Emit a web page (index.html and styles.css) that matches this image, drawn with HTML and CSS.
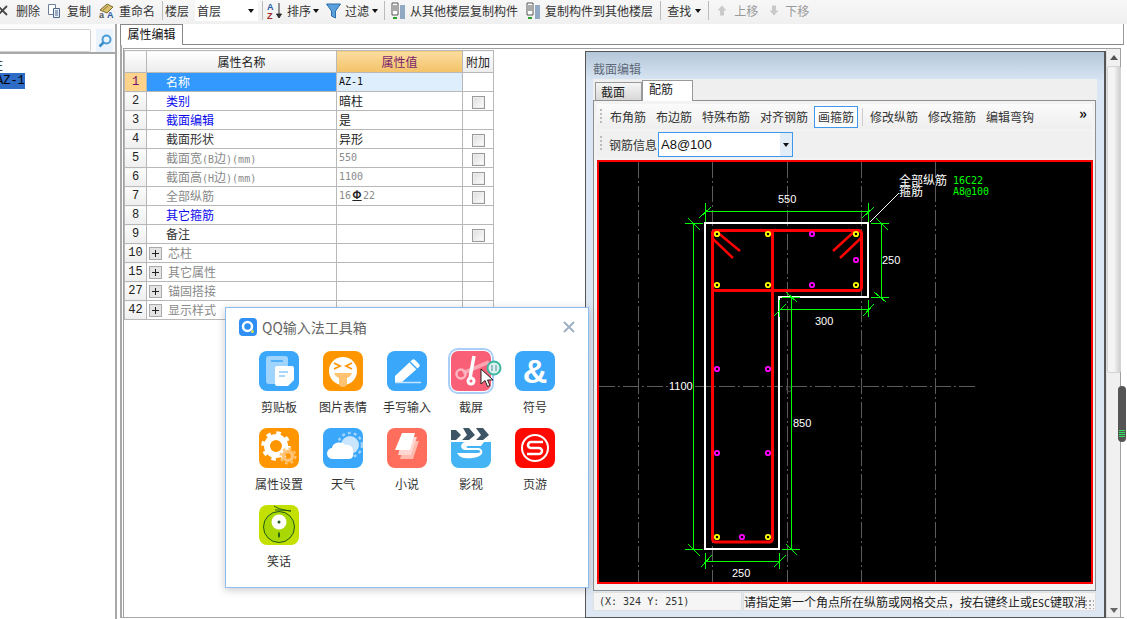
FILE: index.html
```html
<!DOCTYPE html>
<html lang="zh">
<head>
<meta charset="utf-8">
<title>属性编辑</title>
<link rel="stylesheet" href="styles.css">
</head>
<body>
<div class="app">
  <header class="toolbar">
    <span class="tool t-del"><svg class="ic" width="12" height="12" viewBox="0 0 12 12"><path d="M1 1l9 9M10 1l-9 9" stroke="#444" stroke-width="1.800"/></svg></span>
    <span class="tool t-delt">删除</span>
    <span class="tool t-copy"><svg width="16" height="16" viewBox="0 0 16 16"><path d="M1.500 1.500h7v10h-7z" fill="#fff" stroke="#6b7f9a"/><path d="M6.500 5.500h6v9h-6z" fill="#e8eef7" stroke="#50688a"/><path d="M8 8h3M8 10h3M8 12h3" stroke="#50688a"/></svg>复制</span>
    <span class="tool t-ren"><svg width="17" height="17" viewBox="0 0 17 17"><path d="M1 8l7-6 6 3-6 6z" fill="#d9c06a" stroke="#7b6a30"/><path d="M4 8l5-4" stroke="#8a7a3a"/><text x="0" y="16" class="mini">a</text><text x="8" y="16" class="mini blue">A</text></svg>重命名</span>
    <i class="sep s1"></i>
    <span class="tool t-floor">楼层</span>
    <span class="combo"><span>首层</span><b class="tri"></b></span>
    <i class="sep s2"></i>
    <span class="tool t-sort"><svg width="17" height="18" viewBox="0 0 17 18"><text x="0" y="8" class="mini blue">A</text><text x="0" y="17" class="mini red">Z</text><path d="M12 1v14M9.500 12l2.500 4 2.500-4z" stroke="#333" fill="#333"/></svg>排序<b class="tri"></b></span>
    <span class="tool t-filter"><svg width="15" height="16" viewBox="0 0 15 16"><path d="M0.500 1h14l-5 7v7l-4-2v-5z" fill="#5aa0dc" stroke="#2c6ea8"/></svg>过滤<b class="tri"></b></span>
    <i class="sep s3"></i>
    <span class="tool t-from"><svg width="15" height="18" viewBox="0 0 15 18"><path d="M1 1h6v12H1z" fill="#fff" stroke="#555"/><path d="M2 4h4M2 6h4M2 8h4" stroke="#555"/><path d="M9 4h5M9 6h5M9 8h5M9 10h5M9 12h5M9 14h5M9 16h5" stroke="#2f5f90"/><path d="M2 15h4v2H2z" fill="#2aa12a"/></svg>从其他楼层复制构件</span>
    <span class="tool t-to"><svg width="15" height="18" viewBox="0 0 15 18"><path d="M1 1h6v12H1z" fill="#fff" stroke="#555"/><path d="M2 4h4M2 6h4M2 8h4" stroke="#555"/><path d="M9 4h5M9 6h5M9 8h5M9 10h5M9 12h5M9 14h5M9 16h5" stroke="#2f5f90"/><path d="M2 15h4v2H2z" fill="#2aa12a"/></svg>复制构件到其他楼层</span>
    <i class="sep s4"></i>
    <span class="tool t-find">查找<b class="tri"></b></span>
    <i class="sep s5"></i>
    <span class="tool t-up off"><svg width="10" height="11" viewBox="0 0 10 11"><path d="M5 0.500L9.500 5.500H7v5H3v-5H0.500z" fill="#c9c9c9"/></svg>上移</span>
    <span class="tool t-down off"><svg width="10" height="11" viewBox="0 0 10 11"><path d="M5 10.500L9.500 5.500H7v-5H3v5H0.500z" fill="#c9c9c9"/></svg>下移</span>
  </header>

  <div class="main">
    <aside class="side">
      <div class="searchrow">
        <div class="searchbox"></div>
        <span class="searchbtn"><svg width="14" height="14" viewBox="0 0 14 14"><circle cx="8.500" cy="5.500" r="4" fill="#e8f4ff" stroke="#4a9ad8" stroke-width="2"/><path d="M5.500 8.500L1.500 12.500" stroke="#3b8ccb" stroke-width="2.500"/></svg></span>
      </div>
      <div class="tree">
        <div class="tree-item first">柱</div>
        <div class="tree-item sel">AZ-1</div>
      </div>
    </aside>

    <section class="content">
      <div class="tabstrip"><span class="tab">属性编辑</span></div>
      <div class="tabbody">
      <div class="pane">
        <div class="gridwrap">
          <table class="grid">
            <colgroup><col class="c0"><col class="c1"><col class="c2"><col class="c3"></colgroup>
            <thead><tr><th></th><th>属性名称</th><th class="hl">属性值</th><th>附加</th></tr></thead>
            <tbody>
              <tr class="cur"><td class="n">1</td><td class="name">名称</td><td class="val mono">AZ-1</td><td></td></tr>
              <tr><td class="n">2</td><td class="name link">类别</td><td class="val">暗柱</td><td class="ck"><i></i></td></tr>
              <tr><td class="n">3</td><td class="name link">截面编辑</td><td class="val">是</td><td></td></tr>
              <tr><td class="n">4</td><td class="name">截面形状</td><td class="val">异形</td><td class="ck"><i></i></td></tr>
              <tr><td class="n">5</td><td class="name dim">截面宽<span class="asc">(B</span>边<span class="asc">)(mm)</span></td><td class="val dim mono">550</td><td class="ck"><i></i></td></tr>
              <tr><td class="n">6</td><td class="name dim">截面高<span class="asc">(H</span>边<span class="asc">)(mm)</span></td><td class="val dim mono">1100</td><td class="ck"><i></i></td></tr>
              <tr><td class="n">7</td><td class="name dim">全部纵筋</td><td class="val dim mono">16<span class="rebar">Φ</span>22</td><td class="ck"><i></i></td></tr>
              <tr><td class="n">8</td><td class="name link">其它箍筋</td><td></td><td></td></tr>
              <tr><td class="n">9</td><td class="name">备注</td><td></td><td class="ck"><i></i></td></tr>
              <tr><td class="n">10</td><td class="name dim grp"><b class="plus"></b>芯柱</td><td></td><td></td></tr>
              <tr><td class="n">15</td><td class="name dim grp"><b class="plus"></b>其它属性</td><td></td><td></td></tr>
              <tr><td class="n">27</td><td class="name dim grp"><b class="plus"></b>锚固搭接</td><td></td><td></td></tr>
              <tr><td class="n">42</td><td class="name dim grp"><b class="plus"></b>显示样式</td><td></td><td></td></tr>
            </tbody>
          </table>
        </div>
        <div class="vscroll">
          <span class="arrow-up"></span>
          <div class="vthumb"></div>
          <span class="arrow-down"></span>
        </div>
      </div>
      </div>
    </section>
  </div>

  <div class="dialog">
    <div class="dlg-title">截面编辑</div>
    <div class="dlg-tabs"><span class="dtab">截面</span><span class="dtab on">配筋</span></div>
    <div class="dlg-body">
      <div class="dbar">
        <i class="grip"></i>
        <span class="dbtn">布角筋</span><span class="dbtn">布边筋</span><span class="dbtn">特殊布筋</span><span class="dbtn">对齐钢筋</span><span class="dbtn active">画箍筋</span>
        <i class="dsep"></i>
        <span class="dbtn">修改纵筋</span><span class="dbtn">修改箍筋</span><span class="dbtn">编辑弯钩</span>
        <span class="more">»</span>
      </div>
      <div class="dbar second">
        <i class="grip"></i>
        <span class="dlabel">钢筋信息</span>
        <span class="dcombo"><span>A8@100</span><b class="dd"><b class="tri"></b></b></span>
      </div>
      <svg class="cad" viewBox="600 162 492 420" width="492" height="420" role="img">
        <g class="gridline">
          <path d="M639.500 162V582M713.500 162V582M788.500 162V582M862.500 162V582M936.500 162V582"/>
          <path d="M600 386.500H976"/>
        </g>
        <circle class="origin" cx="790" cy="389" r="2.500"/>
        <path class="outline" d="M706 223H869V297H780V549H706Z"/>
        <g class="stir">
          <rect x="713.500" y="230.500" width="60" height="311.500" rx="3"/>
          <rect x="713.500" y="230.500" width="149" height="60" rx="3"/>
          <path d="M718 232L741 251M714 239L734 258M857 230L834 251M862 238L841 258"/>
        </g>
        <g class="dimline">
          <path d="M706 211H869M706 203V222M869 203V222M700 218L712 207M863 218L875 207"/>
          <path d="M694 223V549M686 223H704M689 218L701 230M686 549H704M689 544L701 556"/>
          <path d="M882 223V297M872 223H890M877 218L889 230M872 297H890M875 292L887 302"/>
          <path d="M780 309H869M780 300V317M869 300V317M775 316L787 304M864 316L875 304"/>
          <path d="M792 297V549M783 297H801M787 292L798 302M783 549H801M787 544L798 555"/>
          <path d="M706 561H780M706 553V569M780 553V569M702 567L713 555M775 567L787 555"/>
        </g>
        <path class="leader" d="M871 222L900 193"/>
        <g class="bar-y">
          <circle cx="718" cy="234" r="2.200"/><circle cx="769" cy="234" r="2.200"/><circle cx="857" cy="234" r="2.200"/>
          <circle cx="718" cy="285" r="2.200"/><circle cx="769" cy="285" r="2.200"/><circle cx="857" cy="285" r="2.200"/>
          <circle cx="718" cy="537" r="2.200"/><circle cx="769" cy="537" r="2.200"/>
        </g>
        <g class="bar-m">
          <circle cx="813" cy="234" r="2.200"/><circle cx="857" cy="260" r="2.200"/><circle cx="813" cy="285" r="2.200"/>
          <circle cx="718" cy="369" r="2.200"/><circle cx="769" cy="369" r="2.200"/>
          <circle cx="718" cy="453" r="2.200"/><circle cx="769" cy="453" r="2.200"/><circle cx="743" cy="537" r="2.200"/>
        </g>
        <rect class="maskbg" x="669" y="379" width="25" height="14"/>
        <g class="lbl">
          <text x="779" y="203">550</text><text x="883" y="264">250</text><text x="816" y="325">300</text>
          <text x="670" y="390">1100</text><text x="794" y="427">850</text><text x="733" y="577">250</text>
          <text x="900" y="185" class="cjk">全部纵筋</text><text x="900" y="196" class="cjk">箍筋</text>
        </g>
        <g class="lblg"><text x="954" y="184">16C22</text><text x="954" y="195">A8@100</text></g>
      </svg>
    </div>
    <div class="dlg-status">
      <span class="st-l">(X: 324 Y: 251)</span>
      <span class="st-r">请指定第一个角点所在纵筋或网格交点，按右键终止或<span class="asc">ESC</span>键取消<i class="sgrip"></i></span>
    </div>
  </div>

  <div class="overlay-thumb"><i></i><i></i><i></i><i></i></div>

  <div class="qq">
    <div class="qq-head">
      <svg class="qq-logo" width="18" height="18" viewBox="0 0 18 18"><rect width="18" height="18" rx="4" fill="#2f8ff5"/><circle cx="8.500" cy="8.500" r="4.500" fill="none" stroke="#fff" stroke-width="2.500"/><circle cx="13.500" cy="13.500" r="1.500" fill="#d7e34a"/></svg>
      <span class="qq-title">QQ输入法工具箱</span>
      <svg class="qq-close" width="12" height="12" viewBox="0 0 12 12"><path d="M1 1l10 10M11 1L1 11" stroke="#9db0c4" stroke-width="2"/></svg>
    </div>
    <div class="qq-grid">
      <div class="qi"><svg class="ico" viewBox="0 0 40 40"><rect width="40" height="40" rx="8" fill="#3aa7fa"/><rect x="7" y="5" width="22" height="28" rx="3" fill="#9fd4ff"/><path d="M12 10h12" stroke="#3aa7fa" stroke-width="1.500"/><path d="M18 15h15a2 2 0 0 1 2 2v12l-6 6H18a2 2 0 0 1-2-2V17a2 2 0 0 1 2-2z" fill="#fff"/><path d="M20 21h9M20 25h6" stroke="#8cc9fb" stroke-width="1.500"/></svg><span>剪贴板</span></div>
      <div class="qi"><svg class="ico" viewBox="0 0 40 40"><rect width="40" height="40" rx="8" fill="#ff9600"/><circle cx="20" cy="20" r="14" fill="#fff"/><path d="M11 12l6 3-6 3M29 12l-6 3 6 3" fill="none" stroke="#ff9600" stroke-width="1.800"/><path d="M11 22h18c-1 3-3 4-5 5v5a4 4 0 0 1-8 0v-5c-2-1-4-2-5-5z" fill="#ffc372"/></svg><span>图片表情</span></div>
      <div class="qi"><svg class="ico" viewBox="0 0 40 40"><rect width="40" height="40" rx="8" fill="#3aa7fa"/><path d="M8 25L25 9a2 2 0 0 1 3 0l4 4a2 2 0 0 1 0 3L15 31H8z" fill="#fff"/><path d="M23 11l7 7" stroke="#3aa7fa" stroke-width="1.500"/><path d="M8 31.500h26" stroke="#c5e5fe" stroke-width="1.500"/></svg><span>手写输入</span></div>
      <div class="qi cut"><svg class="ico" viewBox="0 0 40 40"><rect width="40" height="40" rx="6" fill="#fa5f78"/><path d="M12 22l26-11" stroke="#fca5b2" stroke-width="4"/><path d="M23 5l-4 22" stroke="#fff" stroke-width="3.500"/><circle cx="10" cy="23" r="4.500" fill="none" stroke="#fcb6c1" stroke-width="2.500"/><circle cx="20" cy="30" r="4.500" fill="#fff"/><circle cx="20" cy="30" r="1.500" fill="#fa5f78"/></svg><span>截屏</span>
        <svg class="busy" width="18" height="18" viewBox="0 0 18 18"><circle cx="9" cy="9" r="6.500" fill="#d8f3ee" stroke="#3fb6a0" stroke-width="2"/><path d="M7 6v6M11 6v6" stroke="#8ab" stroke-width="1.500"/></svg>
        <svg class="cursor" width="14" height="20" viewBox="0 0 14 20"><path d="M1 1v15l4-3.500 2.500 6 2.500-1-2.500-5.500H13z" fill="#fff" stroke="#222"/></svg>
      </div>
      <div class="qi"><svg class="ico" viewBox="0 0 40 40"><rect width="40" height="40" rx="8" fill="#3aa7fa"/><text class="amp" x="20" y="32">&amp;</text></svg><span>符号</span></div>

      <div class="qi"><svg class="ico" viewBox="0 0 40 40"><rect width="40" height="40" rx="8" fill="#ff9600"/><circle cx="17" cy="18" r="9" fill="none" stroke="#fff" stroke-width="6"/><circle cx="17" cy="18" r="13" fill="none" stroke="#fff" stroke-width="3.500" stroke-dasharray="4.500 5.700"/><circle cx="29" cy="28" r="4.500" fill="none" stroke="#ffc375" stroke-width="3.500"/><circle cx="29" cy="28" r="7.500" fill="none" stroke="#ffc375" stroke-width="2" stroke-dasharray="3 2.900"/></svg><span>属性设置</span></div>
      <div class="qi"><svg class="ico" viewBox="0 0 40 40"><rect width="40" height="40" rx="8" fill="#3aa7fa"/><circle cx="27" cy="17" r="9" fill="#c9e6fe"/><circle cx="27" cy="17" r="12" fill="none" stroke="#9fd3fd" stroke-width="2.500" stroke-dasharray="3 3"/><path d="M10 31a5.500 5.500 0 0 1-1-11c1-6 10-7 13-3 6-1 9 3 8 8 1 3-1 6-4 6z" fill="#fff"/></svg><span>天气</span></div>
      <div class="qi"><svg class="ico" viewBox="0 0 40 40"><rect width="40" height="40" rx="8" fill="#ff6e5c"/><path d="M19 13h13l-6 18H13z" fill="#ffb9ad"/><path d="M16 9h14l-6 18H11z" fill="#ffd7d0"/><path d="M15 5h13l-5 17H8z" fill="#fff"/></svg><span>小说</span></div>
      <div class="qi"><svg class="ico" viewBox="0 0 40 40"><rect width="40" height="40" rx="8" fill="#fff"/><path d="M0 14h40v18a8 8 0 0 1-8 8H8a8 8 0 0 1-8-8z" fill="#44b4f4"/><path d="M0 2h5l5 5-5 5H0zM12 0h6l6 7-6 5h-7l5-5zM25 0h7l6 7-6 5h-7l5-5z" fill="#3e5566"/><path d="M33 14H15c-6 0-7 8 0 8h12c3 0 3 3 0 3H6c3 5 8 6 16 5 10-1 12-8 6-10H17c-2 0-2-2 0-2h13z" fill="#fff"/></svg><span>影视</span></div>
      <div class="qi"><svg class="ico" viewBox="0 0 40 40"><rect width="40" height="40" rx="8" fill="#ff0a00"/><circle cx="20" cy="20" r="13" fill="none" stroke="#fff" stroke-width="2"/><path d="M28 14H16a3 3 0 0 0 0 6h8a3 3 0 0 1 0 6H12" fill="none" stroke="#fff" stroke-width="2.500"/></svg><span>页游</span></div>

      <div class="qi"><svg class="ico" viewBox="0 0 40 40"><rect width="40" height="40" rx="8" fill="#c3e000"/><circle cx="20" cy="22" r="15.500" fill="#a9d800" stroke="#1f5a1a" stroke-width="1"/><path d="M15 1c5 3 9 4 17 5M16 5c5 0 9 0 16 1" stroke="#1f5a1a" stroke-width="1" fill="none"/><circle cx="20" cy="17" r="7.500" fill="#fff"/><circle cx="20" cy="17" r="1.500" fill="#1f5a1a"/><ellipse cx="20" cy="30" rx="1" ry="3" fill="#1f5a1a"/></svg><span>笑话</span></div>
    </div>
  </div>
</div>
</body>
</html>
```

FILE: styles.css
```css
* { box-sizing: border-box; }
html, body { margin: 0; height: 100%; overflow: hidden; background: #fff; }
body { font-family: "Noto Sans CJK SC", "Liberation Sans", sans-serif; font-size: 12px; color: #222; }
.app { position: relative; width: 1127px; height: 619px; overflow: hidden; display: flex; flex-direction: column; }
.asc { font: 10px "DejaVu Sans Mono", monospace; }

/* top toolbar */
.toolbar { height: 24px; flex: none; display: flex; align-items: center; padding-bottom: 3px; background: linear-gradient(#f7f7f7, #f0f0f0); white-space: nowrap; line-height: 16px; color: #333; }
.tool { display: inline-flex; align-items: center; flex: none; }
.tool svg { flex: none; }
.tri { display: inline-block; width: 0; height: 0; border: 3px solid transparent; border-top: 4px solid #111; border-bottom: 0; }
.tool .tri { margin-left: 4px; }
.tool.t-sort .tri, .tool.t-filter .tri { margin-left: -1px; }
.sep { flex: none; width: 1px; height: 19px; background: #bbb; }
.mini { font: bold 9px "Liberation Sans", sans-serif; fill: #555; }
.mini.blue { fill: #2a5aa8; }
.mini.red { fill: #a02a2a; }
.t-del { margin-left: -3px; }
.t-delt { margin-left: 7px; }
.t-copy { margin-left: 7px; gap: 4px; }
.t-ren { margin-left: 8px; gap: 3px; }
.s1 { margin-left: 7px; }
.t-floor { margin-left: 2px; }
.combo { width: 63px; height: 21px; margin-left: 6px; padding: 0 4px 0 2px; background: #fff; display: flex; align-items: center; justify-content: space-between; }
.s2 { margin-left: 4px; }
.t-sort { margin-left: 4px; gap: 3px; }
.t-filter { margin-left: 7px; gap: 4px; }
.s3 { margin-left: 6px; }
.t-from { margin-left: 6px; gap: 4px; }
.t-to { margin-left: 8px; gap: 4px; }
.s4 { margin-left: 7px; }
.t-find { margin-left: 6px; }
.s5 { margin-left: 7px; }
.t-up { margin-left: 8px; gap: 7px; }
.t-down { margin-left: 11px; gap: 6px; }
.off { color: #9a9a9a; }

.main { flex: 1; display: flex; min-height: 0; background: #fff; }

/* left tree */
.side { width: 117px; flex: none; border-right: 2px solid #a8a8a8; }
.searchrow { height: 30px; padding-top: 5px; display: flex; border-bottom: 2px solid #a8a8a8; background: #fbfbfb; }
.searchbox { width: 91px; height: 23px; background: #fff; border: 1px solid #d0d0d0; border-left: 0; border-radius: 0 2px 2px 0; }
.searchbtn { margin-left: 5px; width: 17px; height: 23px; background: #eaf3fb; display: flex; align-items: center; justify-content: center; }
.tree { padding-top: 4px; font-family: "Liberation Mono", "Noto Sans CJK SC", monospace; font-size: 12px; color: #111; }
.tree-item { height: 14px; line-height: 14px; }
.first { margin-left: -9px; font-family: "Noto Sans CJK SC", sans-serif; }
.sel { width: 25px; height: 16px; line-height: 16px; margin-top: 1px; background: #2f6cc6; color: #000; text-indent: -4px; overflow: hidden; white-space: nowrap; }

/* right content */
.content { flex: 1; min-width: 0; margin-left: 3px; margin-right: 3px; display: flex; flex-direction: column; }
.tabstrip { height: 21px; flex: none; border-bottom: 1px solid #888; border-right: 1px solid #999; }
.tab { display: inline-block; height: 21px; width: 63px; text-align: center; background: #fff; border: 1px solid #888; border-bottom: 0; font-size: 12px; line-height: 18px; color: #111; }
.tabbody { flex: 1; min-height: 0; display: flex; margin-bottom: 1px; padding-left: 1px; border-left: 2px solid #a8a8a8; border-bottom: 1px solid #a8a8a8; }
.pane { flex: 1; min-width: 0; margin: 3px 3px 0 0; display: flex; border: 1px solid #a0a0a0; border-bottom: 0; }
.gridwrap { flex: 1; min-width: 0; padding: 1px 0 0 0; overflow: hidden; }
.vscroll { width: 14px; flex: none; background: #f0f0f0; position: relative; border-left: 1px solid #ddd; display: flex; flex-direction: column; align-items: center; padding-top: 6px; }
.arrow-up { width: 0; height: 0; border: 4px solid transparent; border-bottom: 5px solid #555; border-top: 0; }
.vthumb { width: 14px; height: 307px; margin-top: 6px; background: linear-gradient(90deg, #f4f4f4 50%, #cfcfcf); border: 1px solid #d4d4d4; border-radius: 2px; }
.arrow-down { position: absolute; bottom: 4px; width: 0; height: 0; border: 4px solid transparent; border-top: 5px solid #666; border-bottom: 0; }

/* property grid */
.grid { border-collapse: collapse; table-layout: fixed; width: 369px; }
.c0 { width: 22px; } .c1 { width: 190px; } .c2 { width: 126px; } .c3 { width: 31px; }
.grid th, .grid td { border: 1px solid #b8b8b8; padding: 0; height: 19px; font-weight: 400; overflow: hidden; white-space: nowrap; line-height: 16px; font-size: 12px; }
.grid th { height: 22px; background: linear-gradient(#fff, #ececec); text-align: center; color: #222; }
.grid th.hl { background: linear-gradient(#fbdc9e, #f3c268); color: #7a1f6e; }
.n { background: linear-gradient(#fdfdfd, #eee); text-align: center; font-family: "Liberation Mono", monospace; color: #222; }
.name { padding-left: 19px !important; color: #333; }
.grp { padding-left: 2px !important; }
.val { padding-left: 2px !important; color: #222; }
.mono { font-family: "DejaVu Sans Mono", monospace; font-size: 10px !important; }
.link { color: #0a0aee; }
.dim { color: #8a8a8a; }
.rebar { display: inline-block; width: 12px; text-align: center; font: 700 11px/12px "Noto Sans CJK SC", sans-serif; color: #222; text-decoration: underline; }
.cur .n { background: #fdd28a; color: #70106a; }
.cur .name { background: #3399ff; color: #fff; }
.cur .val { background: #deeefc; color: #111; }
.ck { text-align: center; }
.ck i { display: inline-block; width: 13px; height: 13px; vertical-align: middle; border: 1px solid #9a9a9a; background: linear-gradient(135deg, #dcdcdc, #fff); box-shadow: inset 0 0 0 1px #eee; }
.plus { display: inline-block; width: 13px; height: 13px; margin-right: 6px; vertical-align: -2px; border: 1px solid #aaa; background: linear-gradient(#222, #222) center/7px 1px no-repeat, linear-gradient(#222, #222) center/1px 7px no-repeat, #e4e4e4; }

/* section editor dialog (floating window) */
.dialog { position: absolute; left: 585px; top: 51px; width: 521px; height: 567px; border: 1px solid #555; border-right-width: 2px; background: linear-gradient(#b4c7d9, #dae6f4 30px, #dde7f3); padding: 0 7px; display: flex; flex-direction: column; }
.dlg-title { height: 27px; flex: none; padding-top: 9px; line-height: 16px; color: #5e6a78; }
.dlg-tabs { height: 21px; flex: none; display: flex; align-items: flex-end; padding-left: 2px; background: #efefef; }
.dtab { width: 47px; height: 18px; line-height: 17px; padding-left: 5px; border: 1px solid #999; border-bottom: 0; background: linear-gradient(#f5f5f5, #d8d8d8); color: #222; font-size: 12px; }
.dtab.on { width: 51px; height: 21px; line-height: 16px; padding-left: 6px; background: #fff; position: relative; top: 1px; z-index: 1; }
.dlg-body { width: 503px; height: 491px; flex: none; border: 1px solid #8f8f8f; background: #f3f3f3; padding: 3px 3px 0; display: flex; flex-direction: column; gap: 2px; }
.dbar { height: 25px; flex: none; position: relative; display: flex; align-items: center; padding-left: 9px; background: linear-gradient(#fbfbfb, #eee); color: #333; white-space: nowrap; }
.dbar.second { height: 27px; padding-left: 12px; background: #f0f0f0; }
.grip { position: absolute; left: 3px; top: 5px; width: 2px; height: 15px; background: repeating-linear-gradient(#bbb 0 2px, transparent 2px 4px); }
.dbtn { height: 22px; line-height: 19px; padding: 0 3px; margin-right: 2px; flex: none; border: 1px solid transparent; color: #333; }
.dbtn.active { background: #fff; border-color: #3f98ec; }
.dsep { width: 1px; height: 18px; background: #ccc; margin: 0 3px 0 2px; flex: none; }
.more { position: absolute; right: 5px; top: 0; font-size: 15px; line-height: 18px; font-weight: 700; color: #111; }
.dlabel { flex: none; color: #333; }
.dcombo { margin-left: 1px; width: 135px; height: 25px; background: #fff; border: 1px solid #3f98ec; font-size: 13px; font-family: "Liberation Sans", sans-serif; color: #111; display: flex; align-items: center; justify-content: space-between; padding-left: 2px; }
.dd { width: 12px; height: 23px; background: #e3edf8; display: flex; align-items: center; justify-content: center; }
.cad { flex: none; display: block; box-sizing: content-box; width: 492px; height: 420px; border: 2px solid #f00; background: #000; }
.gridline path { stroke: #5c5c5c; stroke-width: 1; stroke-dasharray: 16 3 2 3; fill: none; shape-rendering: crispEdges; }
.origin { fill: none; stroke: #444; stroke-width: 1; }
.outline { fill: none; stroke: #fff; stroke-width: 2; shape-rendering: crispEdges; }
.stir rect { fill: none; stroke: #f00; stroke-width: 3; }
.stir path { fill: none; stroke: #f00; stroke-width: 2.500; }
.dimline path { fill: none; stroke: #0f0; stroke-width: 1; shape-rendering: crispEdges; }
.leader { stroke: #fff; stroke-width: 1; shape-rendering: crispEdges; }
.bar-y circle { fill: #000; stroke: #ff0; stroke-width: 1.800; }
.bar-m circle { fill: #000; stroke: #f0f; stroke-width: 1.800; }
.maskbg { fill: #000; }
.lbl text { fill: #fff; font: 11px "Liberation Sans", sans-serif; }
.lbl .cjk { font: 12px "Noto Sans CJK SC", sans-serif; }
.lblg text { fill: #0f0; font: 10px "DejaVu Sans Mono", monospace; }
.dlg-status { margin-top: 1px; width: 503px; height: 19px; flex: none; display: flex; gap: 1px; }
.st-l { width: 149px; padding-left: 5px; background: #f5f5f5; border: 1px solid #e0e0e0; font: 10px/17px "DejaVu Sans Mono", monospace; color: #333; }
.st-r { flex: 1; min-width: 0; position: relative; padding-left: 0; background: #f5f5f5; border: 1px solid #e0e0e0; line-height: 17px; color: #222; white-space: nowrap; overflow: hidden; }
.sgrip { position: absolute; right: 1px; bottom: 1px; width: 10px; height: 10px; background: radial-gradient(circle, #aaa 1px, transparent 1.200px) 0 0/4px 4px; }

.overlay-thumb { position: absolute; left: 1118px; top: 386px; width: 8px; height: 56px; border-radius: 4px; background: #555; display: flex; flex-direction: column; justify-content: flex-end; gap: 1px; padding: 0 1px 5px; }
.overlay-thumb i { height: 1px; background: #2fe05a; }

/* QQ toolbox popup */
.qq { position: absolute; left: 225px; top: 307px; width: 364px; height: 281px; background: #fff; border: 1px solid #8dbdf0; box-shadow: 0 2px 8px rgba(0,0,0,.22); padding: 10px 0 0 33px; }
.qq-head { position: absolute; left: 13px; top: 10px; right: 13px; height: 18px; display: flex; align-items: center; }
.qq-logo { flex: none; }
.qq-title { margin-left: 5px; font-size: 14px; color: #666; flex: 1; line-height: 18px; }
.qq-close { flex: none; }
.qq-grid { margin-top: 33px; display: grid; grid-template-columns: repeat(5, 64px); grid-auto-rows: 77px; }
.qi { width: 40px; position: relative; display: flex; flex-direction: column; align-items: center; }
.ico { width: 40px; height: 40px; flex: none; display: block; }
.amp { fill: #fff; font: 700 34px "Liberation Sans", sans-serif; text-anchor: middle; }
.qi span { margin-top: 7px; flex: none; font-size: 12px; line-height: 17px; color: #333; white-space: nowrap; }
.cut .ico { border-radius: 7px; box-shadow: 0 0 0 1px #fff, 0 0 0 3px #a9cff8; }
.busy { position: absolute; left: 34px; top: 8px; }
.cursor { position: absolute; left: 29px; top: 17px; }
```
